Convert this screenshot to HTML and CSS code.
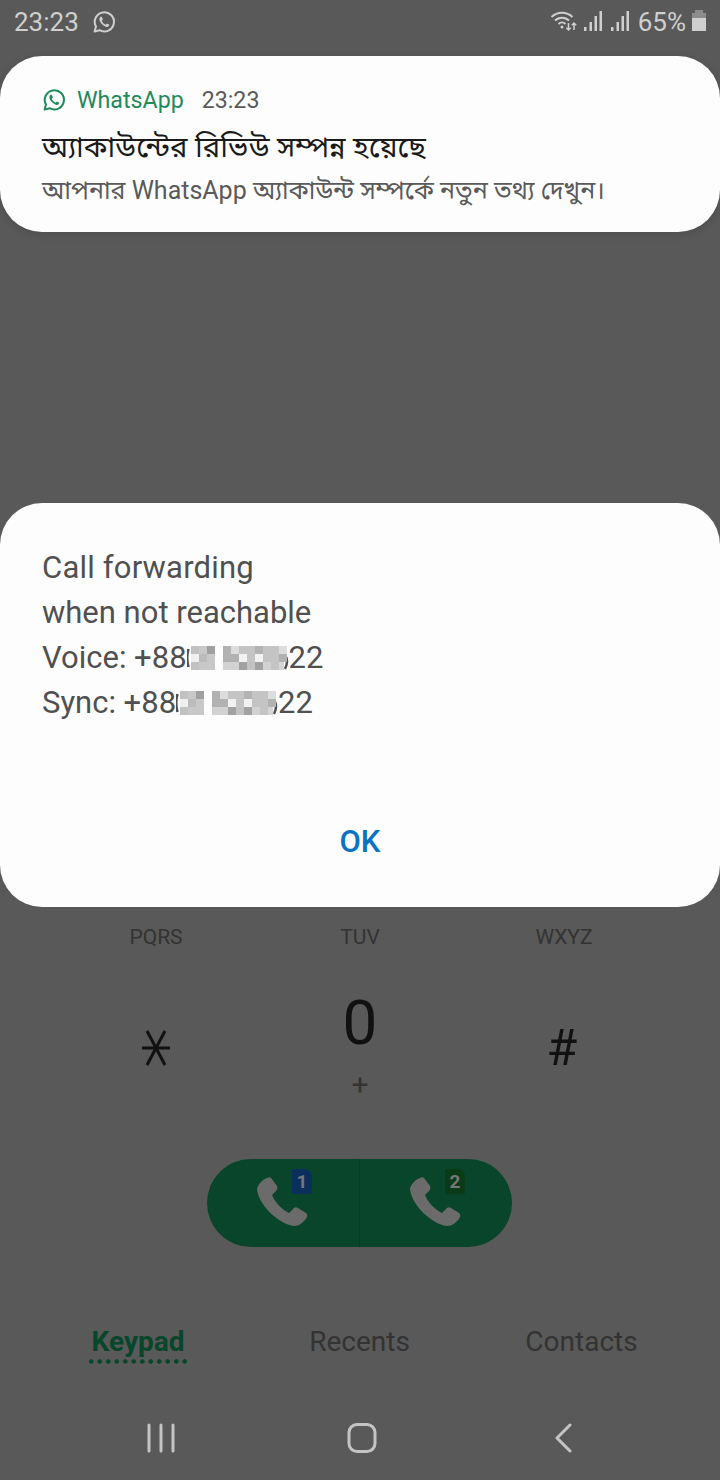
FILE: index.html
```html
<!doctype html>
<html lang="en">
  <head>
    <meta charset="UTF-8" />
    <meta name="viewport" content="width=device-width, initial-scale=1.0" />
    <title>Phone</title>
    <link rel="stylesheet" href="styles.css">
  </head>
  <body>
    <div class="screen">
      <div class="status-bar">
        <div class="status-left">
          <span>23:23</span>
          <svg class="wa-icon" viewBox="0 0 24 24" width="24" height="24">
            <path class="wa-ring" d="M2.6 21.6 L4 16.6 A9.6 9.6 0 1 1 7.6 20.2 Z" />
            <path class="wa-phone" d="M8.6 6.7 C8 7.2 7.2 8.2 7.4 9.6 C7.8 12.6 11.2 16.4 14.6 16.9 C16 17.1 17.2 16.2 17.4 14.8 L14.9 13.5 L13.8 14.8 C12 14.2 10.4 12.4 9.8 10.8 L10.9 9.6 L9.8 6.8 Z" />
          </svg>
        </div>
        <div class="status-right">
          <svg viewBox="0 0 27 20" width="27" height="20" class="wifi">
            <path class="st-line" d="M1.500 6 A15 15 0 0 1 22.500 6 M5 9.500 A10 10 0 0 1 19 9.500 M8.500 13 A5 5 0 0 1 15.500 13" />
            <circle class="st-fill" cx="12" cy="16" r="1.500" />
            <path class="st-line thin" d="M18.500 12 V19 M16.300 16.800 L18.500 19 L20.700 16.800 M24 19 V12 M21.800 14.200 L24 12 L26.200 14.200" />
          </svg>
          <svg viewBox="0 0 18 20" width="18" height="20" class="signal">
            <path class="st-bar" d="M0 16h2.500v4H0z M5.500 11h2.500v9H5.500z M10.500 5h2.500v15h-2.500z M15.500 0H18v20h-2.500z" />
          </svg>
          <svg viewBox="0 0 18 20" width="18" height="20" class="signal">
            <path class="st-bar" d="M0 16h2.500v4H0z M5.500 11h2.500v9H5.500z M10.500 5h2.500v15h-2.500z M15.500 0H18v20h-2.500z" />
          </svg>
          <span class="battery-text">65%</span>
          <div class="battery">
            <div class="battery-nib"></div>
            <div class="battery-body"><div class="battery-level"></div></div>
          </div>
        </div>
      </div>

      <div class="notification">
        <div class="notif-head">
          <svg class="notif-icon" viewBox="0 0 24 24" width="24" height="24">
            <path class="wa-ring green" d="M2.6 21.6 L4 16.6 A9.6 9.6 0 1 1 7.6 20.2 Z" />
            <path class="wa-phone green" d="M8.6 6.7 C8 7.2 7.2 8.2 7.4 9.6 C7.8 12.6 11.2 16.4 14.6 16.9 C16 17.1 17.2 16.2 17.4 14.8 L14.9 13.5 L13.8 14.8 C12 14.2 10.4 12.4 9.8 10.8 L10.9 9.6 L9.8 6.8 Z" />
          </svg>
          <span class="notif-app">WhatsApp</span>
          <span class="notif-time">23:23</span>
        </div>
        <div class="notif-title">অ্যাকাউন্টের রিভিউ সম্পন্ন হয়েছে</div>
        <div class="notif-text">আপনার WhatsApp অ্যাকাউন্ট সম্পর্কে নতুন তথ্য দেখুন।</div>
      </div>

      <div class="dialog">
        <svg class="mosaic-defs" width="0" height="0">
          <symbol id="mosaic" viewBox="0 0 102 24">
            <g transform="translate(-2)">
              <path class="sliver" d="M3.500 3 Q1 12 3.500 21 M100 9 Q104 15 100 23" />
              <path fill="#c2c2c2" d="M6 0h8v8H6zM6 16h8v8H6z" />
              <path fill="#f0f0f0" d="M6 8h8v8H6z" />
              <path fill="#c8c8c8" d="M14 0h8v8h-8zM14 16h8v8h-8zM22 8h8v16h-8z" />
              <path fill="#bcbcbc" d="M14 8h8v8h-8z" />
              <path fill="#a0a0a0" d="M22 0h8v8h-8z" />
              <path fill="#b2b2b2" d="M38 0h8v16h-8zM46 8h8v8h-8zM70 0h8v8h-8zM94 8h8v8h-8z" />
              <path fill="#dcdcdc" d="M46 0h8v8h-8zM94 0h8v8h-8z" />
              <path fill="#c4c4c4" d="M54 0h16v8H54zM62 8h8v8h-8zM78 0h8v16h-8zM86 0h8v8h-8zM70 16h8v8h-8zM86 8h8v16h-8z" />
              <path fill="#f2f2f2" d="M54 8h8v8h-8zM70 8h8v8h-8z" />
              <path fill="#d2d2d2" d="M38 16h16v8H38zM78 16h8v8h-8z" />
              <path fill="#a2a2a2" d="M54 16h8v8h-8zM70 16h8v8h-8z" />
              <path fill="#c2c2c2" d="M62 16h8v8h-8z" />
              <path fill="#d6d6d6" d="M94 16h5v8h-5z" />
            </g>
          </symbol>
        </svg>
        <div class="dialog-text">
          <div class="first-line">Call forwarding</div>
          <div>when not reachable</div>
          <div class="number-line">Voice: +88<svg class="mosaic" width="102" height="24"><use href="#mosaic" /></svg>22</div>
          <div class="number-line">Sync: +88<svg class="mosaic" width="102" height="24"><use href="#mosaic" /></svg>22</div>
        </div>
        <div class="dialog-ok">OK</div>
      </div>

      <div class="keypad">
        <div class="key-letters">
          <span>PQRS</span>
          <span>TUV</span>
          <span>WXYZ</span>
        </div>
        <div class="key-row">
          <div class="key key-side">
            <svg viewBox="0 0 28 38" width="28" height="38" class="star">
              <path d="M0 19 H28 M5 2 L23 36 M23 2 L5 36" />
            </svg>
          </div>
          <div class="key">
            <span class="digit">0</span>
            <span class="plus">+</span>
          </div>
          <div class="key key-side"><span class="hash">#</span></div>
        </div>
      </div>

      <div class="call-row">
        <div class="call-buttons">
          <div class="call-half">
            <svg class="phone" viewBox="0 0 54 54" width="54" height="54">
              <path d="M13 2 C10 3 4 7 3 13 C4 28 24 48 40 50 C46 50 51 45 53 41 C53.500 39 53 38 52 37 L44 32 C42.500 31 41 31 40 32 L35 37 C28 34 20 25 18 19 L22 15 C23.500 13 23.500 12 23 10 L17 2 C16 1 14.500 1 13 2 Z" />
            </svg>
            <span class="sim sim-1">1</span>
          </div>
          <div class="call-half">
            <svg class="phone" viewBox="0 0 54 54" width="54" height="54">
              <path d="M13 2 C10 3 4 7 3 13 C4 28 24 48 40 50 C46 50 51 45 53 41 C53.500 39 53 38 52 37 L44 32 C42.500 31 41 31 40 32 L35 37 C28 34 20 25 18 19 L22 15 C23.500 13 23.500 12 23 10 L17 2 C16 1 14.500 1 13 2 Z" />
            </svg>
            <span class="sim sim-2">2</span>
          </div>
        </div>
      </div>

      <div class="tabs">
        <div class="tab active">Keypad</div>
        <div class="tab">Recents</div>
        <div class="tab">Contacts</div>
      </div>

      <div class="nav-bar">
        <svg viewBox="0 0 30 30" width="30" height="30" class="nav-icon nav-recents">
          <path d="M3 2 V28 M15 2 V28 M27 2 V28" />
        </svg>
        <svg viewBox="0 0 30 30" width="30" height="30" class="nav-icon nav-home">
          <rect x="2" y="1.500" width="26" height="27" rx="8" />
        </svg>
        <svg viewBox="0 0 30 30" width="30" height="30" class="nav-icon">
          <path d="M21 2 L8 15 L21 28" />
        </svg>
      </div>
    </div>
  </body>
</html>
```

FILE: styles.css
```css
* {
  box-sizing: border-box;
  margin: 0;
  padding: 0;
}

body {
  background-color: #595959;
  font-family: Roboto, 'Noto Sans', sans-serif;
}

.screen {
  width: 720px;
  height: 1480px;
  display: flex;
  flex-direction: column;
  overflow: hidden;
}

.status-bar {
  height: 56px;
  padding: 6px 14px 0 14px;
  display: flex;
  justify-content: space-between;
  align-items: flex-start;
  color: #cfcfcf;
  font-size: 26px;
  line-height: 32px;
}

.status-left {
  display: flex;
  align-items: center;
  gap: 13px;
}

.status-right {
  display: flex;
  align-items: center;
  height: 32px;
}

.wifi,
.signal {
  margin-bottom: 3px;
}

.signal {
  margin-left: 7px;
}

.signal + .signal {
  margin-left: 9px;
}

.wa-ring {
  fill: none;
  stroke: #cfcfcf;
  stroke-width: 2;
  stroke-linejoin: round;
}

.wa-phone {
  fill: #cfcfcf;
}

.wa-ring.green {
  stroke: #1f8a5c;
}

.wa-phone.green {
  fill: #1f8a5c;
}

.st-line {
  fill: none;
  stroke: #cfcfcf;
  stroke-width: 2;
}

.st-line.thin {
  stroke-width: 1.5;
}

.st-fill,
.st-bar {
  fill: #cfcfcf;
}

.battery-text {
  margin-left: 9px;
}

.battery {
  width: 14px;
  margin-left: 6px;
  margin-bottom: 3px;
  display: flex;
  flex-direction: column;
  align-items: center;
}

.battery-nib {
  width: 8px;
  height: 3px;
  background-color: #8b8b8b;
}

.battery-body {
  width: 14px;
  height: 18px;
  padding-top: 5px;
  background-color: #8b8b8b;
}

.battery-level {
  height: 13px;
  background-color: #cfcfcf;
}

.notification {
  height: 176px;
  background-color: #fdfdfd;
  border-radius: 42px;
  padding: 30px 42px 0 42px;
  box-shadow: 0 2px 8px rgba(0, 0, 0, 0.15);
}

.notif-head {
  display: flex;
  align-items: center;
  height: 28px;
  font-size: 23.2px;
}

.notif-app {
  color: #1f8a5c;
  margin-left: 11px;
}

.notif-time {
  color: #5a5a5a;
  margin-left: 18px;
}

.notif-title {
  font-family: 'Noto Sans Bengali', 'Noto Sans', 'DejaVu Sans', sans-serif;
  font-size: 29.3px;
  line-height: 40px;
  margin-top: 16px;
  color: #1a1a1a;
}

.notif-text {
  font-family: Roboto, 'Noto Sans Bengali', 'Noto Sans', sans-serif;
  font-size: 25px;
  line-height: 40px;
  margin-top: 1px;
  color: #5a5a5a;
}

.dialog {
  height: 404px;
  margin-top: 271px;
  background-color: #fdfdfd;
  border-radius: 42px;
  padding: 42px 42px 0 42px;
  display: flex;
  flex-direction: column;
}

.mosaic-defs {
  position: absolute;
}

.dialog-text {
  font-size: 31px;
  line-height: 45px;
  color: #505050;
}

.first-line {
  letter-spacing: 0.2px;
}

.number-line {
  display: flex;
  align-items: center;
}

.mosaic {
  display: block;
  shape-rendering: crispEdges;
}

.sliver {
  fill: none;
  stroke: #505050;
  stroke-width: 2.5;
  shape-rendering: auto;
}

.dialog-ok {
  margin-top: 97px;
  text-align: center;
  color: #0a72c4;
  font-size: 31px;
  font-weight: 500;
  line-height: 40px;
}

.keypad {
  padding-top: 16px;
}

.key-letters,
.key-row {
  display: grid;
  grid-template-columns: repeat(3, 204px);
  justify-content: center;
  text-align: center;
}

.key-letters {
  font-size: 21px;
  line-height: 28px;
  color: #333333;
}

.key-row {
  margin-top: 38px;
  height: 170px;
  color: #111111;
}

.key {
  display: flex;
  flex-direction: column;
  align-items: center;
}

.key-side {
  padding-top: 40px;
}

.digit {
  font-size: 62px;
  line-height: 68px;
}

.plus {
  font-size: 30px;
  line-height: 36px;
  margin-top: 10px;
  color: #333333;
}

.star path {
  fill: none;
  stroke: #111111;
  stroke-width: 3;
}

.hash {
  font-size: 50px;
  line-height: 46px;
  margin-top: -4px;
  margin-right: 4px;
}

.call-row {
  display: flex;
  justify-content: center;
  padding-right: 1px;
}

.call-buttons {
  width: 305px;
  height: 88px;
  background-color: #08452b;
  border-radius: 44px;
  display: flex;
}

.call-half {
  flex: 1;
  position: relative;
  display: flex;
  justify-content: center;
  align-items: center;
}

.call-half + .call-half {
  border-left: 1px solid #063a24;
}

.phone {
  margin-right: 5px;
}

.phone path {
  fill: #6b6b6b;
}

.sim {
  position: absolute;
  top: 10px;
  left: 85px;
  width: 20px;
  height: 25px;
  border-radius: 2px 8px 2px 2px;
  font-size: 19px;
  font-weight: 700;
  line-height: 25px;
  text-align: center;
  color: #777777;
}

.sim-1 {
  background-color: #0b2f5c;
}

.sim-2 {
  background-color: #0b3a17;
}

.tabs {
  display: grid;
  grid-template-columns: 221px 222px 222px;
  justify-content: center;
  margin-top: 76px;
  text-align: center;
  font-size: 28px;
  line-height: 38px;
  color: #333333;
}

.tab.active {
  color: #07462b;
  font-weight: 700;
  justify-self: center;
  padding-bottom: 3px;
  background-image: radial-gradient(circle, #07462b 2px, transparent 2.4px);
  background-size: 8.5px 5px;
  background-repeat: repeat-x;
  background-position: left bottom;
  width: 102px;
}

.nav-bar {
  display: grid;
  grid-template-columns: repeat(3, 204px);
  justify-content: center;
  justify-items: center;
  margin-top: 59px;
}

.nav-recents {
  margin-left: 9px;
}

.nav-home {
  margin-left: 4px;
}

.nav-icon path,
.nav-icon rect {
  fill: none;
  stroke: #c4c4c4;
  stroke-width: 3;
  stroke-linecap: round;
  stroke-linejoin: round;
}
```
